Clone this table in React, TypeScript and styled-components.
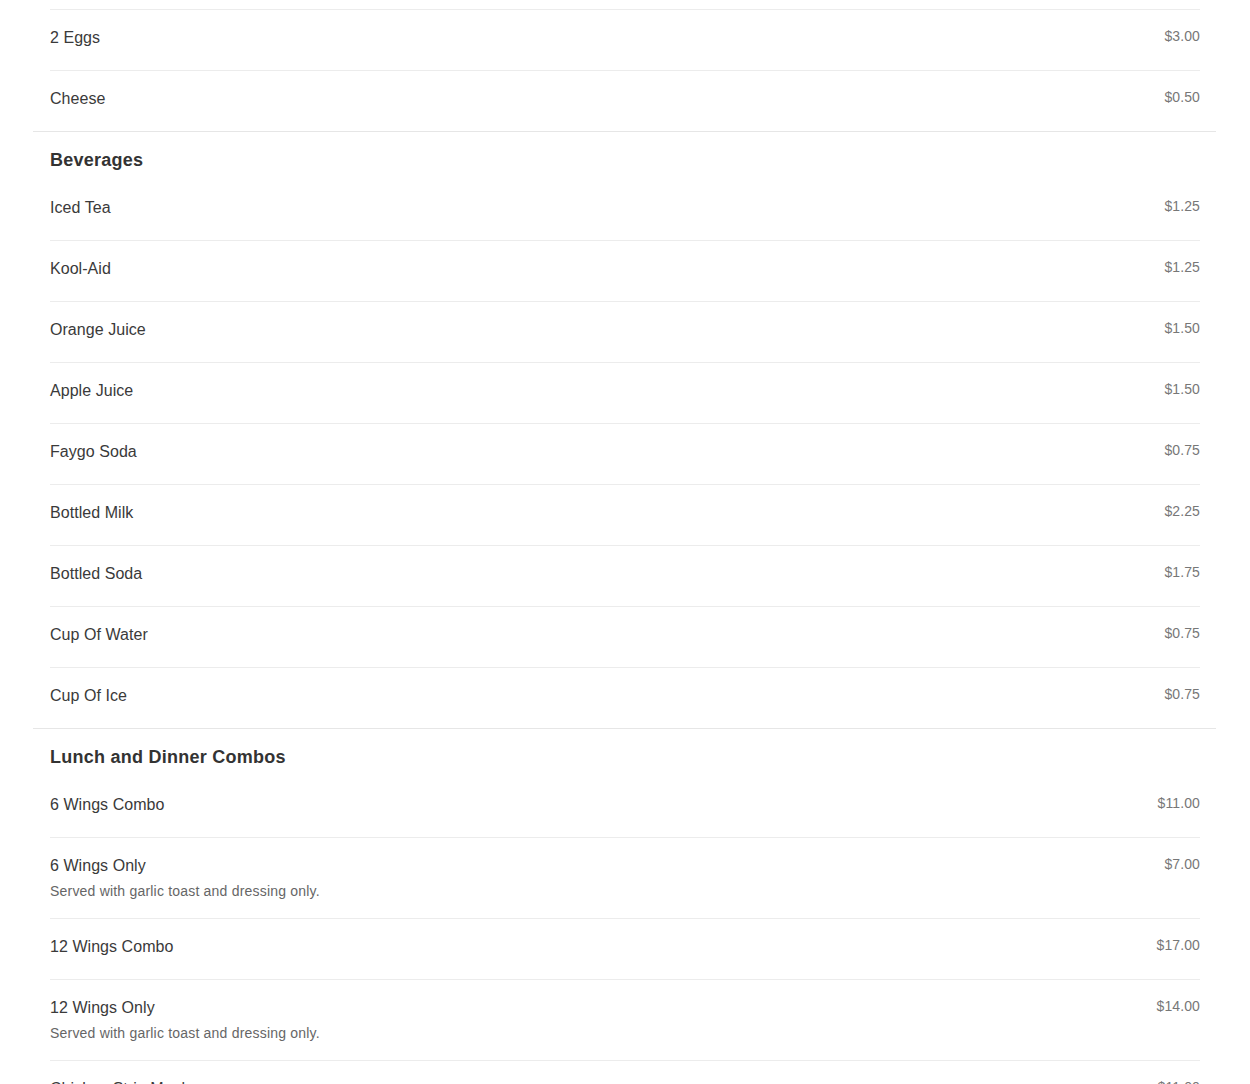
import React from "react";
import styled, { createGlobalStyle } from "styled-components";

interface MenuItem {
  name: string;
  price: string;
  description?: string;
}

interface MenuSection {
  title?: string;
  items: MenuItem[];
}

const GlobalStyle = createGlobalStyle`
  html, body {
    margin: 0;
    padding: 0;
    background: #fff;
    font-family: "Liberation Sans", Arial, Helvetica, sans-serif;
    color: #333;
  }
`;

const Page = styled.div`
  width: 1250px;
  height: 1084px;
  overflow: hidden;
`;

const Menu = styled.div`
  margin: 0 34px 0 33px;
`;

const Section = styled.section<{ $continued?: boolean }>`
  padding: 0 16px 0 17px;
  border-bottom: 1px solid #e6e6e6;
  ${({ $continued }) => ($continued ? "padding-top: 9px;" : "")}
`;

const Heading = styled.h2`
  margin: 0 0 9px;
  padding-top: 17px;
  font-size: 18px;
  line-height: 22px;
  font-weight: 700;
  letter-spacing: 0.25px;
  color: #333;
`;

const Row = styled.div<{ $first?: boolean }>`
  display: flex;
  justify-content: space-between;
  align-items: flex-start;
  padding: 17px 0;
  border-top: ${({ $first }) => ($first ? "1px solid #ececec" : "none")};
  & + & {
    border-top: 1px solid #ececec;
  }
`;

const Info = styled.div`
  display: flex;
  flex-direction: column;
`;

const Name = styled.div`
  font-size: 16px;
  line-height: 20px;
  padding-top: 1px;
  margin-bottom: 5px;
  letter-spacing: 0.05px;
  color: #3a3a3a;
`;

const Description = styled.div`
  font-size: 14px;
  line-height: 20px;
  letter-spacing: 0.2px;
  color: #666;
`;

const Price = styled.div`
  font-size: 14px;
  line-height: 18px;
  letter-spacing: 0.1px;
  color: #777;
`;

const sections: MenuSection[] = [
  {
    items: [
      { name: "2 Eggs", price: "$3.00" },
      { name: "Cheese", price: "$0.50" },
    ],
  },
  {
    title: "Beverages",
    items: [
      { name: "Iced Tea", price: "$1.25" },
      { name: "Kool-Aid", price: "$1.25" },
      { name: "Orange Juice", price: "$1.50" },
      { name: "Apple Juice", price: "$1.50" },
      { name: "Faygo Soda", price: "$0.75" },
      { name: "Bottled Milk", price: "$2.25" },
      { name: "Bottled Soda", price: "$1.75" },
      { name: "Cup Of Water", price: "$0.75" },
      { name: "Cup Of Ice", price: "$0.75" },
    ],
  },
  {
    title: "Lunch and Dinner Combos",
    items: [
      { name: "6 Wings Combo", price: "$11.00" },
      {
        name: "6 Wings Only",
        price: "$7.00",
        description: "Served with garlic toast and dressing only.",
      },
      { name: "12 Wings Combo", price: "$17.00" },
      {
        name: "12 Wings Only",
        price: "$14.00",
        description: "Served with garlic toast and dressing only.",
      },
      { name: "Chicken Strip Meal", price: "$11.00" },
    ],
  },
];

const App: React.FC = () => {
  return (
    <Page>
      <GlobalStyle />
      <Menu>
        {sections.map((section, si) => (
          <Section key={si} $continued={!section.title}>
            {section.title && <Heading>{section.title}</Heading>}
            {section.items.map((item, i) => (
              <Row key={item.name} $first={!section.title && i === 0}>
                <Info>
                  <Name>{item.name}</Name>
                  {item.description && (
                    <Description>{item.description}</Description>
                  )}
                </Info>
                <Price>{item.price}</Price>
              </Row>
            ))}
          </Section>
        ))}
      </Menu>
    </Page>
  );
};

export default App;
